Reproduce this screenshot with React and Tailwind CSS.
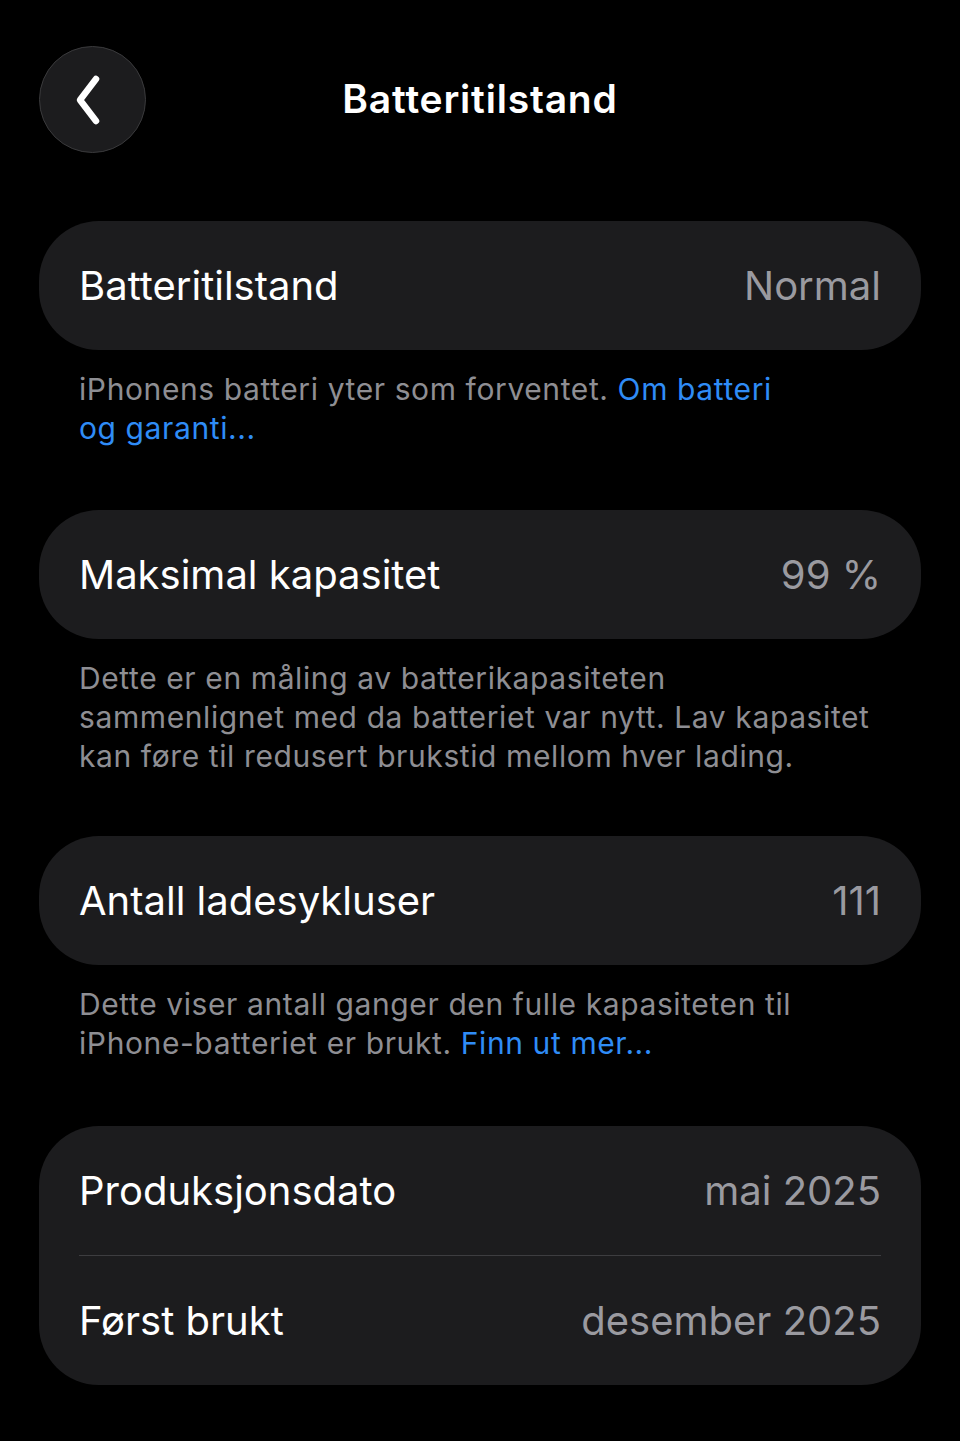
const FONT = { fontFamily: 'Inter, "Noto Sans", sans-serif' }

function Row({ label, value }) {
  return (
    <div className="flex items-center justify-between h-[129px] px-10">
      <span className="text-white text-[40px]">{label}</span>
      <span className="text-[#9a9aa0] text-[40px]">{value}</span>
    </div>
  )
}

function Card({ children }) {
  return <div className="bg-[#1c1c1e] rounded-[60px] overflow-hidden">{children}</div>
}

function Footer({ children }) {
  return (
    <p className="px-10 pt-5 text-[30px] leading-[39px] text-[#8e8e93] tracking-[0.6px]">
      {children}
    </p>
  )
}

export default function App() {
  return (
    <div className="min-h-[1441px] w-[960px] bg-black px-[39px]" style={FONT}>
      {/* Header */}
      <div className="grid grid-cols-[1fr_auto_1fr] items-center pt-[46px]">
        <div>
          <button className="w-[107px] h-[107px] rounded-full bg-[#1c1c1e] border border-[#3a3a3c] flex items-center justify-center">
            <svg width="40" height="56" viewBox="0 0 40 56" className="-ml-[6px]">
              <path d="M26 7 L10 28 L26 49" fill="none" stroke="white" strokeWidth="6.5" strokeLinecap="round" strokeLinejoin="round" />
            </svg>
          </button>
        </div>
        <h1 className="text-white text-[39px] font-semibold tracking-[0.8px]">Batteritilstand</h1>
        <div />
      </div>

      <div className="mt-[68px]">
        <Card>
          <Row label="Batteritilstand" value="Normal" />
        </Card>
        <Footer>
          iPhonens batteri yter som forventet. <span className="text-[#2f8cf6]">Om batteri</span>
          <br />
          <span className="text-[#2f8cf6]">og garanti...</span>
        </Footer>
      </div>

      <div className="mt-[62px]">
        <Card>
          <Row label="Maksimal kapasitet" value="99 %" />
        </Card>
        <Footer>
          Dette er en måling av batterikapasiteten
          <br />
          sammenlignet med da batteriet var nytt. Lav kapasitet
          <br />
          kan føre til redusert brukstid mellom hver lading.
        </Footer>
      </div>

      <div className="mt-[60px]">
        <Card>
          <Row label="Antall ladesykluser" value="111" />
        </Card>
        <Footer>
          Dette viser antall ganger den fulle kapasiteten til
          <br />
          iPhone-batteriet er brukt. <span className="text-[#2f8cf6]">Finn ut mer...</span>
        </Footer>
      </div>

      <div className="mt-[63px]">
        <Card>
          <Row label="Produksjonsdato" value="mai 2025" />
          <div className="mx-10 h-px bg-[#3d3d40]" />
          <Row label="Først brukt" value="desember 2025" />
        </Card>
      </div>
    </div>
  )
}
